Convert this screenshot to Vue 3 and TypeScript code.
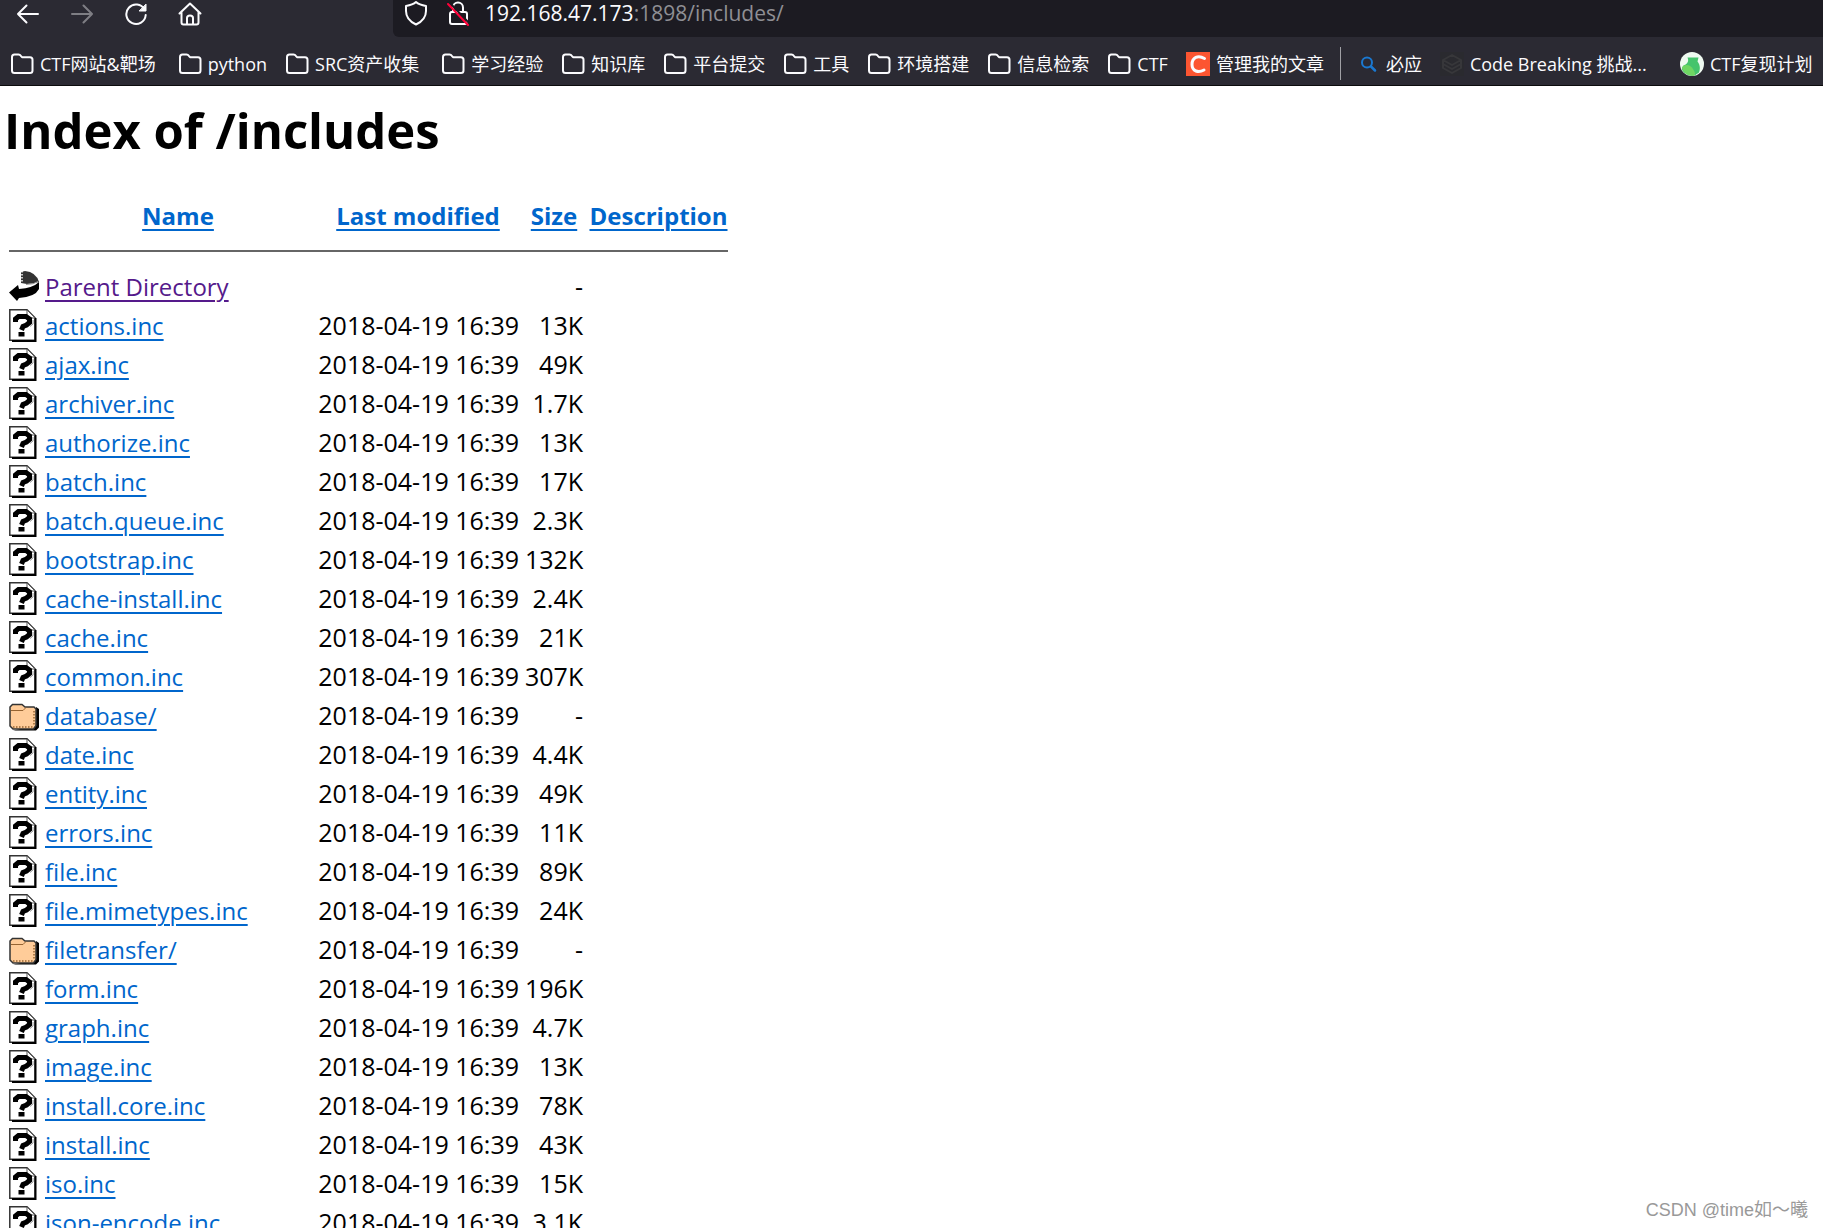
<script setup lang="ts">
interface Bookmark {
  label: string
  icon: 'folder' | 'csdn' | 'search' | 'cube' | 'flask'
  divided?: boolean
  wide?: boolean
  mixed?: boolean
}

interface Entry {
  name: string
  size: string
  kind: 'file' | 'folder' | 'back'
}

const bookmarks: Bookmark[] = [
  { label: 'CTF网站&靶场', icon: 'folder', mixed: true },
  { label: 'python', icon: 'folder' },
  { label: 'SRC资产收集', icon: 'folder', mixed: true },
  { label: '学习经验', icon: 'folder' },
  { label: '知识库', icon: 'folder' },
  { label: '平台提交', icon: 'folder' },
  { label: '工具', icon: 'folder' },
  { label: '环境搭建', icon: 'folder' },
  { label: '信息检索', icon: 'folder' },
  { label: 'CTF', icon: 'folder' },
  { label: '管理我的文章', icon: 'csdn' },
  { label: '必应', icon: 'search', divided: true },
  { label: 'Code Breaking 挑战...', icon: 'cube', wide: true },
  { label: 'CTF复现计划', icon: 'flask' },
]

const file = (name: string, size: string): Entry => ({ name, size, kind: 'file' })
const folder = (name: string): Entry => ({ name, size: '-', kind: 'folder' })

const entries: Entry[] = [
  { name: 'Parent Directory', size: '-', kind: 'back' },
  file('actions.inc', '13K'),
  file('ajax.inc', '49K'),
  file('archiver.inc', '1.7K'),
  file('authorize.inc', '13K'),
  file('batch.inc', '17K'),
  file('batch.queue.inc', '2.3K'),
  file('bootstrap.inc', '132K'),
  file('cache-install.inc', '2.4K'),
  file('cache.inc', '21K'),
  file('common.inc', '307K'),
  folder('database/'),
  file('date.inc', '4.4K'),
  file('entity.inc', '49K'),
  file('errors.inc', '11K'),
  file('file.inc', '89K'),
  file('file.mimetypes.inc', '24K'),
  folder('filetransfer/'),
  file('form.inc', '196K'),
  file('graph.inc', '4.7K'),
  file('image.inc', '13K'),
  file('install.core.inc', '78K'),
  file('install.inc', '43K'),
  file('iso.inc', '15K'),
  file('json-encode.inc', '3.1K'),
]
const modified = '2018-04-19 16:39'
</script>

<template>
  <div class="window">
    <header class="chrome">
      <div class="toolbar">
        <nav class="nav">
          <button type="button" aria-label="Back">
            <svg width="24" height="24" viewBox="0 0 24 24"><path d="M22 12H2M10.500 3.500 2 12l8.500 8.500" /></svg>
          </button>
          <button type="button" aria-label="Forward" class="dim">
            <svg width="24" height="24" viewBox="0 0 24 24"><path d="M2 12h20M13.500 3.500 22 12l-8.500 8.500" /></svg>
          </button>
          <button type="button" aria-label="Reload">
            <svg width="24" height="24" viewBox="0 0 24 24"><path d="M20.500 7.500A9.700 9.700 0 1 0 21.700 13" /><path class="solid" d="M22 2.500V9h-6.500z" /></svg>
          </button>
          <button type="button" aria-label="Home">
            <svg width="24" height="24" viewBox="0 0 24 24"><path d="M1.500 11.500 12 1.500l10.500 10M3.500 10v10.500q0 2 2 2h13q2 0 2-2V10M9 22.500V16q0-2.500 3-2.500t3 2.500v6.500" /></svg>
          </button>
        </nav>
        <div class="address">
          <svg width="24" height="26" viewBox="0 0 24 26"><path d="M12 2c2.500 2.200 6 3.300 10 4v5c0 6-3.500 10.500-10 13.500C5.500 21.500 2 17 2 11V6c4-.7 7.500-1.800 10-4z" /></svg>
          <svg width="24" height="26" viewBox="0 0 24 26"><path d="M7 12V7.500a5 5 0 0 1 10 0V12M5 12h14q2 0 2 2v8q0 2-2 2H6q-2 0-2-2v-8q0-2 2-2" /><path class="slash-edge" d="M3 2l20 21" /><path class="slash" d="M2 4l20 21" /></svg>
          <p class="url"><b>192.168.47.173</b>:1898/includes/</p>
        </div>
      </div>
      <nav class="bookmarks">
        <a v-for="b in bookmarks" :key="b.label" href="#" :class="{ divided: b.divided, wide: b.wide, mixed: b.mixed }">
          <svg v-if="b.icon === 'folder'" width="24" height="24" viewBox="0 0 24 24"><path d="M2 19V5q0-2.500 2.500-2.500h4q1.500 0 2.300 1.300L12 5.200h8q2.500 0 2.500 2.500V18.500q0 2.500-2.500 2.500H4.500Q2 21 2 18.500z" /></svg>
          <svg v-else-if="b.icon === 'csdn'" width="24" height="24" viewBox="0 0 24 24"><rect width="24" height="24" fill="#fc5531" stroke="none" /><path stroke-width="3" d="M18.500 6.500C12 2.500 6 5.500 6 12.500c0 7 6.500 8.500 12 5.500" /></svg>
          <svg v-else-if="b.icon === 'search'" width="24" height="24" viewBox="0 0 24 24"><g stroke="#1a78d0" stroke-width="2"><circle cx="11" cy="10.500" r="5" /><path stroke-width="2.500" d="m15 14.500 4 4" /></g></svg>
          <svg v-else-if="b.icon === 'cube'" width="24" height="24" viewBox="0 0 24 24"><rect width="24" height="24" fill="#2a2a2f" stroke="none" /><g stroke="#37373a" stroke-width="2"><path d="m12 3 9 5-9 5-9-5zM3 12l9 5 9-5M3 8v8l9 5 9-5V8" /></g></svg>
          <svg v-else width="24" height="24" viewBox="0 0 24 24"><circle cx="12" cy="12" r="12" fill="#effaf1" stroke="none" /><path fill="#45c46c" stroke="none" d="M7.500 5.500h11l-1 4c2.500 3 3 7 1.500 11Q12 27 4 20.500 0 17 3.500 13.500C8 12 9 9 7.500 5.500z" /><path fill="#6fd663" stroke="none" d="M3 14q6-3 10 3t0 7Q4 23 2 16z" /></svg>
          <span>{{ b.label }}</span>
        </a>
      </nav>
    </header>

    <main>
      <h1>Index of /includes</h1>
      <table>
        <colgroup>
          <col class="c-icon" /><col class="c-name" /><col class="c-date" /><col class="c-size" /><col class="c-desc" />
        </colgroup>
        <thead>
          <tr>
            <th></th>
            <th><a href="#">Name</a></th>
            <th><a href="#">Last modified</a></th>
            <th><a href="#">Size</a></th>
            <th><a href="#">Description</a></th>
          </tr>
          <tr class="rule"><td colspan="5"><hr /></td></tr>
        </thead>
        <tbody>
          <tr v-for="e in entries" :key="e.name">
            <td class="icon">
              <svg v-if="e.kind === 'file'" width="30" height="33" viewBox="0 0 30 33">
                <path fill="#fff" stroke="#333" stroke-width="1.500" d="M.8.8H18l8 8v22.500H.8z" />
                <path fill="none" stroke="#000" stroke-width="2" d="M3 32h23.500V9" />
                <path fill="#fff" stroke="#555" d="M18 1v8h8z" />
                <path fill="none" stroke="#000" stroke-width="5" d="M6.500 13v-3l3-2.500h7.500l3.500 2.500v3.500l-3 2.500-3.500 1.500-1.500 3.500" />
                <path fill="none" stroke="#999" d="M24 11v4l-3 2.500" />
                <path d="M9.500 23h6v4.500h-6z" />
              </svg>
              <svg v-else-if="e.kind === 'folder'" width="30" height="33" viewBox="0 0 30 33">
                <path d="M4 31.500h23l3-3V10l-3-2v19z" />
                <path fill="#ffcc99" stroke="#333" stroke-width="1.500" d="M1 8 3.500 5.500H13l3 2.500h9l2 2v16.500L24.500 30H4l-3-3z" />
                <path fill="none" stroke="#966432" d="M2 11.500h12l3-3" />
                <path fill="none" stroke="#966432" stroke-width="1.500" stroke-dasharray="1.500 1.500" d="M4 28h20M25 12v14" />
              </svg>
              <svg v-else width="30" height="33" viewBox="0 0 30 33">
                <path fill="#333" d="M12 2l4-1q11 1 14 11-7 2-12 2l-6-1z" />
                <path fill="none" stroke="#fff" stroke-width="1.500" stroke-dasharray="1.500 1.500" d="M13 1v12" />
                <path fill="none" stroke="#999" d="M17 14.500q8 0 12-3" />
                <path d="M30 12v7q-4 8-20 9l-2 3L0 22.500 9 15l1 4q14-1 20-7z" />
              </svg>
            </td>
            <td class="name"><a href="#" :class="{ visited: e.kind === 'back' }">{{ e.name }}</a></td>
            <td class="num">{{ e.kind === 'back' ? '' : modified }}</td>
            <td class="num">{{ e.size }}</td>
            <td></td>
          </tr>
        </tbody>
      </table>
    </main>
    <p class="watermark">CSDN @time如～曦</p>
  </div>
</template>

<style>
body {
  margin: 0;
  background: #fff;
}
</style>

<style scoped>
.window {
  position: relative;
  height: 100vh;
  overflow: hidden;
  background: #fff;
  color: #000;
  font-family: "Open Sans", "Noto Sans CJK SC", sans-serif;
}
.chrome {
  background: #2b2a33;
  border-bottom: 1px solid #0c0c0d;
  color: #fbfbfe;
}
.chrome svg {
  flex: none;
  fill: none;
  stroke: #fbfbfe;
  stroke-width: 2;
  stroke-linecap: round;
  stroke-linejoin: round;
}
.chrome svg .solid {
  fill: #fbfbfe;
  stroke-width: 1;
}
.chrome svg .slash {
  stroke: #ff0039;
}
.chrome svg .slash-edge {
  stroke: #1c1b22;
}
.toolbar {
  display: flex;
  height: 37px;
}
.nav {
  display: flex;
  gap: 30px;
  flex: none;
  width: 377px;
  padding-left: 16px;
}
.nav button {
  display: block;
  width: 24px;
  height: 28px;
  padding: 2px 0 0;
  border: 0;
  background: none;
}
.nav .dim {
  opacity: 0.4;
}
.address {
  display: flex;
  flex: 1;
  gap: 16px;
  padding-left: 11px;
  border-bottom-left-radius: 6px;
  background: #1c1b22;
}
.address svg + svg {
  margin-left: 2px;
}
.url {
  margin: 0;
  font-size: 21px;
  line-height: 26px;
  color: #8f8f94;
}
.address svg + .url {
  margin-left: -1px;
}
.url b {
  font-weight: 400;
  color: #fbfbfe;
}
.bookmarks {
  display: flex;
  align-items: center;
  gap: 18px;
  height: 43px;
  padding: 5px 0 0 10px;
  overflow: hidden;
}
.bookmarks a {
  display: flex;
  flex: none;
  align-items: center;
  gap: 6px;
  height: 33px;
  color: #fbfbfe;
  font-size: 18px;
  line-height: 24px;
  text-decoration: none;
  white-space: nowrap;
}
.bookmarks .mixed {
  padding-right: 4px;
}
.bookmarks .divided {
  margin-left: -2px;
  padding-left: 15px;
  border-left: 1px solid #a0a0a5;
}
.bookmarks .wide span {
  width: 192px;
}
main {
  padding: 0 4px;
}
h1 {
  margin: 0;
  padding: 10px 0 21px;
  font-size: 49px;
  line-height: 68px;
  font-weight: 700;
}
table {
  table-layout: fixed;
  width: 725px;
  margin-left: 2px;
  border-collapse: collapse;
  font-size: 25px;
  line-height: 39px;
}
.c-icon { width: 36px; }
.c-name { width: 272px; }
.c-date { width: 208px; }
.c-size { width: 64px; }
.c-desc { width: 145px; }
th,
td {
  height: 39px;
  padding: 0 3px;
  text-align: left;
  white-space: nowrap;
}
th {
  height: 60px;
  font-size: 24px;
  text-align: center;
}
.name {
  font-size: 24px;
}
.num {
  text-align: right;
}
.rule td {
  height: 22px;
  line-height: 0;
  vertical-align: top;
}
hr {
  height: 2px;
  margin: 5px 0 0;
  border: 0;
  background: #666;
}
.icon {
  padding-right: 0;
}
.icon svg {
  display: block;
}
a {
  color: #0066cc;
  text-decoration-thickness: 2px;
  text-underline-offset: 4px;
}
a.visited {
  color: #551a8b;
}
.watermark {
  position: absolute;
  right: 15px;
  bottom: 5px;
  margin: 0;
  color: #999;
  font-family: "Liberation Sans", "Noto Sans CJK JP", sans-serif;
  font-size: 18px;
  line-height: 26px;
}
</style>
